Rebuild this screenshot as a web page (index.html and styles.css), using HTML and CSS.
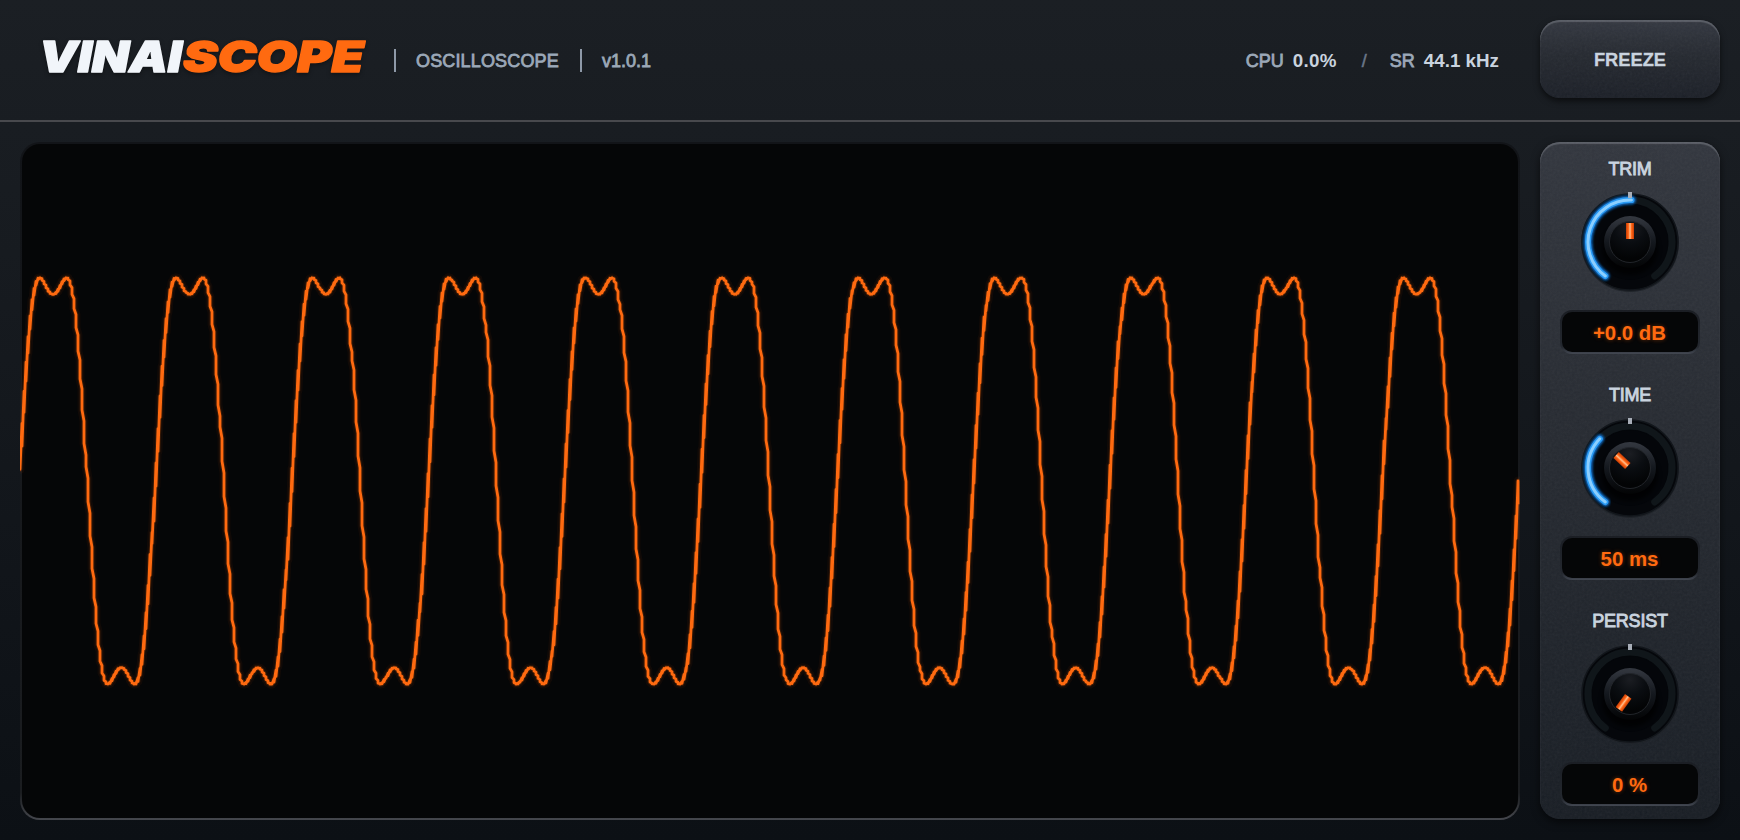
FILE: index.html
```
<!DOCTYPE html>
<html lang="en">
<head>
    <meta charset="UTF-8">
    <meta name="viewport" content="width=device-width, initial-scale=1.0">
    <title>VINAI Scope</title>
    <link rel="stylesheet" href="styles.css">
</head>
<body>
    <svg class="defs" width="0" height="0">
        <defs>
            <filter id="grain" x="0" y="0" width="100%" height="100%">
                <feTurbulence type="fractalNoise" baseFrequency="0.4" numOctaves="3" stitchTiles="stitch"/>
                <feColorMatrix type="saturate" values="0"/>
            </filter>
            <filter id="glow" x="-30%" y="-30%" width="160%" height="160%">
                <feGaussianBlur stdDeviation="1.3"/>
            </filter>
            <filter id="soft" x="-30%" y="-30%" width="160%" height="160%">
                <feGaussianBlur stdDeviation="2"/>
            </filter>
            <linearGradient id="rim" x1="0" y1="0" x2="0" y2="1">
                <stop offset="0" stop-color="#343840"/>
                <stop offset="0.5" stop-color="#14181e"/>
                <stop offset="1" stop-color="#030405"/>
            </linearGradient>
            <radialGradient id="cap" cx="0.5" cy="0.15" r="0.75">
                <stop offset="0" stop-color="#1b1d22"/>
                <stop offset="0.5" stop-color="#0a0d11"/>
                <stop offset="1" stop-color="#030405"/>
            </radialGradient>
            <linearGradient id="pointer" x1="0" y1="0" x2="1" y2="0">
                <stop offset="0" stop-color="#c63d05"/>
                <stop offset="0.3" stop-color="#ff6414"/>
                <stop offset="0.5" stop-color="#ffc090"/>
                <stop offset="0.7" stop-color="#ff6414"/>
                <stop offset="1" stop-color="#c63d05"/>
            </linearGradient>
        </defs>
    </svg>

    <header class="header">
        <svg class="logo" width="336" height="50" viewBox="0 0 336 50">
            <text class="logo-main" x="-1" y="42" textLength="143" lengthAdjust="spacingAndGlyphs">VINAI</text>
            <text class="logo-accent" x="143" y="42" textLength="181" lengthAdjust="spacingAndGlyphs">SCOPE</text>
        </svg>
        <div class="info">
            <span class="divider"></span>
            <span class="product">OSCILLOSCOPE</span>
            <span class="divider"></span>
            <span class="version">v1.0.1</span>
        </div>
        <div class="stats">
            <span class="stat-label">CPU</span>
            <span class="stat-value cpu">0.0%</span>
            <span class="slash">/</span>
            <span class="stat-label">SR</span>
            <span class="stat-value rate">44.1 kHz</span>
        </div>
        <button class="freeze"><svg class="grain"><rect width="100%" height="100%" filter="url(#grain)"/></svg><span>FREEZE</span></button>
    </header>

    <main class="main">
        <div class="screen">
            <canvas id="trace" width="1500" height="678"></canvas>
        </div>
        <aside class="panel" id="panel">
            <svg class="grain"><rect width="100%" height="100%" filter="url(#grain)"/></svg>
        </aside>
    </main>

    <script>
        // Knobs, angles in degrees from 12 o'clock
        const MIN_ANGLE = -144;
        const MAX_ANGLE = 144;
        const controls = [
            { label: 'TRIM', value: '+0.0 dB', angle: 0, arcEnd: 2 },
            { label: 'TIME', value: '50 ms', angle: -47, arcEnd: -46 },
            { label: 'PERSIST', value: '0 %', angle: -144, arcEnd: null }
        ];

        function arc(from, to) {
            const point = (deg) => {
                const a = deg * Math.PI / 180;
                return (55 + 42 * Math.sin(a)).toFixed(2) + ' ' + (55 - 42 * Math.cos(a)).toFixed(2);
            };
            return `M${point(from)}A42 42 0 ${to - from > 180 ? 1 : 0} 1 ${point(to)}`;
        }

        function knob(c) {
            const d = c.arcEnd === null ? '' : arc(MIN_ANGLE, c.arcEnd);
            const lit = d && `
                <path class="arc arc-glow" d="${d}"/>
                <path class="arc arc-blue" d="${d}"/>
                <path class="arc arc-core" d="${d}"/>`;
            return `<svg class="knob" width="110" height="110" viewBox="0 0 110 110">
                <circle class="well-shadow" cx="55" cy="56" r="49"/>
                <circle class="well" cx="55" cy="55" r="48"/>
                <path class="arc track" d="${arc(MIN_ANGLE, MAX_ANGLE)}"/>
                <circle class="dish" cx="55" cy="55" r="38"/>
                ${lit}
                <ellipse class="knob-shadow" cx="55" cy="62" rx="28" ry="26"/>
                <circle cx="55" cy="55" r="26" fill="url(#rim)"/>
                <circle class="cap" cx="55" cy="55" r="20.5" fill="url(#cap)"/>
                <rect x="51" y="36" width="8" height="16" fill="url(#pointer)" transform="rotate(${c.angle} 55 55)"/>
                <rect class="tick" x="53" y="5" width="4" height="6"/>
            </svg>`;
        }

        const panel = document.getElementById('panel');
        controls.forEach((c) => {
            const el = document.createElement('div');
            el.className = 'control';
            el.innerHTML = `<div class="control-label">${c.label}</div>${knob(c)}<div class="readout">${c.value}</div>`;
            panel.appendChild(el);
        });

        // Trace: 220 Hz with a third harmonic, min/max per two pixel column
        const canvas = document.getElementById('trace');
        const ctx = canvas.getContext('2d');
        const sampleCount = 2205;
        const columns = 750;
        const mid = canvas.height / 2;

        function sample(n) {
            const t = 2 * Math.PI * 220 * (n + 1) / 44100;
            return mid - 233.3 * (Math.sin(t) + 0.2 * Math.sin(3 * t));
        }

        ctx.beginPath();
        for (let i = 0; i < columns; i++) {
            const start = Math.floor(i * sampleCount / columns);
            const end = Math.floor((i + 1) * sampleCount / columns);
            let top = Infinity;
            let bottom = -Infinity;
            for (let n = start; n < end; n++) {
                top = Math.min(top, sample(n));
                bottom = Math.max(bottom, sample(n));
            }
            ctx.lineTo(i * 2, top);
            ctx.lineTo(i * 2, bottom);
        }
        ctx.lineJoin = 'round';
        ctx.strokeStyle = 'rgba(255, 106, 16, 0.05)';
        ctx.lineWidth = 9;
        ctx.stroke();
        ctx.strokeStyle = 'rgba(255, 106, 16, 0.15)';
        ctx.lineWidth = 5;
        ctx.stroke();
        ctx.strokeStyle = '#ff6a10';
        ctx.lineWidth = 2.8;
        ctx.stroke();
    </script>
</body>
</html>
```
FILE: styles.css
```
* {
    box-sizing: border-box;
}

body {
    margin: 0;
    width: 1740px;
    height: 840px;
    overflow: hidden;
    font-family: "Liberation Sans", Arial, sans-serif;
    background: linear-gradient(180deg, #1b1f24 0%, #171b20 30%, #0c1015 100%);
    color: #c9d3df;
}

.defs {
    position: absolute;
}

.header {
    display: flex;
    align-items: flex-start;
    height: 122px;
    padding: 20px 20px 0 40px;
    border-bottom: 2px solid #48494d;
}

.logo {
    margin-top: 10px;
    overflow: visible;
    font-family: Inter, "Liberation Sans", sans-serif;
    font-size: 42px;
    font-weight: 900;
    font-style: italic;
    stroke-width: 1.4;
    stroke-linejoin: round;
    filter: drop-shadow(0 2px 2px rgba(0, 0, 0, 0.35));
}

.logo-main {
    fill: #f1f5fa;
    stroke: #f1f5fa;
}

.logo-accent {
    fill: #ff6a10;
    stroke: #ff6a10;
}

.info,
.stats {
    display: flex;
    align-items: center;
    height: 82px;
    font-size: 18px;
    color: #9ba8b8;
    white-space: nowrap;
}

.info {
    margin-left: 18px;
}

.divider {
    width: 2px;
    height: 23px;
    margin-top: -1px;
    background: #8e99a8;
}

.product,
.version,
.stat-label {
    -webkit-text-stroke: 0.8px currentColor;
}

.product {
    width: 143px;
    margin: 0 21px 0 20px;
    letter-spacing: 0.15px;
}

.version {
    margin-left: 20px;
}

.stats {
    margin-left: auto;
    margin-right: 41px;
}

.stat-value {
    margin-left: 9px;
    font-size: 18.8px;
    font-weight: bold;
    color: #c9d3df;
}

.cpu {
    letter-spacing: 0.3px;
}

.slash {
    margin: 0 23px 0 25px;
    color: #6b788a;
    -webkit-text-stroke: 0.5px currentColor;
}

.freeze {
    position: relative;
    width: 180px;
    height: 78px;
    padding: 2px 0 0;
    border: none;
    border-radius: 20px;
    overflow: hidden;
    font: bold 18.3px "Liberation Sans", Arial, sans-serif;
    -webkit-text-stroke: 0.3px currentColor;
    color: #c9d3df;
    background: linear-gradient(180deg, #343841 0%, #262a31 45%, #1c2028 100%);
    box-shadow: inset 0 2px 1px #5a5e66, 0 3px 6px rgba(0, 0, 0, 0.6);
}

.freeze span {
    position: relative;
}

.grain {
    position: absolute;
    left: 0;
    top: 0;
    width: 100%;
    height: 100%;
    opacity: 0.06;
    pointer-events: none;
}

.main {
    display: flex;
    gap: 20px;
    padding: 20px 20px 0;
}

.screen {
    width: 1500px;
    height: 678px;
    border-radius: 20px;
    background: linear-gradient(#050607, #050607) padding-box, linear-gradient(180deg, #121418 0%, #1b1d20 96%, #45474d 100%) border-box;
    border: 2px solid transparent;
}

/* the trace runs over the bezel */
#trace {
    display: block;
    margin: -2px;
}

.panel {
    position: relative;
    width: 180px;
    height: 677px;
    border-radius: 20px;
    overflow: hidden;
    background: linear-gradient(180deg, #33373f 0%, #272b32 40%, #191e25 100%);
    box-shadow: inset 0 2px 1px #5a5e66, 0 3px 8px rgba(0, 0, 0, 0.6);
}

.control {
    position: relative;
    display: flex;
    flex-direction: column;
    align-items: center;
    height: 226px;
    padding-top: 16px;
}

.control-label {
    height: 20px;
    line-height: 23px;
    font-size: 18px;
    letter-spacing: -0.2px;
    -webkit-text-stroke: 0.9px currentColor;
}

.knob {
    display: block;
    margin: 9px 0 13px;
}

.well-shadow {
    fill: #20242a;
}

.well {
    fill: #05070b;
    stroke: #12161b;
    stroke-width: 1.5;
}

.dish {
    fill: #04060a;
}

.arc {
    fill: none;
    stroke-linecap: round;
}

.track {
    stroke: #10161a;
    stroke-width: 7;
}

.arc-glow {
    stroke: #0b62b4;
    stroke-width: 9;
    filter: url(#glow);
}

.arc-blue {
    stroke: #299af4;
    stroke-width: 6;
}

.arc-core {
    stroke: #8ccfff;
    stroke-width: 3;
}

.knob-shadow {
    fill: #000;
    opacity: 0.7;
    filter: url(#soft);
}

.cap {
    stroke: #22252a;
    stroke-width: 1;
}

.tick {
    fill: #a7adb7;
}

.readout {
    width: 140px;
    height: 44px;
    border: 2px solid transparent;
    border-radius: 12px;
    background: linear-gradient(#050607, #050607) padding-box, linear-gradient(180deg, #1b1e24, #24282f 85%, #434852) border-box;
    line-height: 42px;
    text-align: center;
    font-size: 20.4px;
    font-weight: bold;
    text-indent: -1px;
    color: #ff6a10;
    text-shadow: 0 0 4px rgba(255, 106, 16, 0.4);
}
```
